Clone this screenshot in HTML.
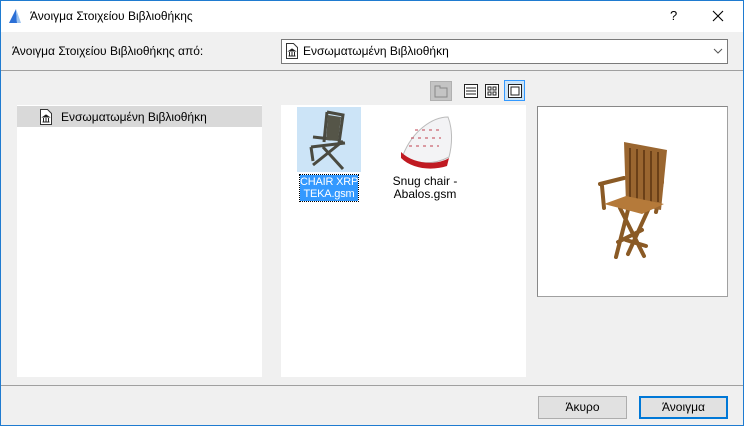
<!DOCTYPE html>
<html><head><meta charset="utf-8"><style>
*{margin:0;padding:0;box-sizing:border-box}
body{width:744px;height:426px;overflow:hidden;font-family:"Liberation Sans","DejaVu Sans",sans-serif;font-size:12px;color:#000;background:#f0f0f0}
.win{position:absolute;left:0;top:0;width:744px;height:426px;border:1px solid #1f7bd0;background:#f0f0f0}
.abs{position:absolute}
</style></head><body>
<div class="win"></div>
<div class="abs" style="left:1px;top:1px;width:742px;height:31px;background:#fff"></div>
<svg class="abs" style="left:7px;top:8px" width="16" height="16"><polygon points="2,15 9,1 10,15" fill="#2b6fd6"/><polygon points="9,1 14,15 10,15" fill="#9cc3f0"/></svg>
<div class="abs" style="left:30px;top:9px;font-size:12px">Άνοιγμα Στοιχείου Βιβλιοθήκης</div>
<div class="abs" style="left:670px;top:8px;font-size:13px">?</div>
<svg class="abs" style="left:712px;top:10px" width="12" height="12"><path d="M1 1L11 11M11 1L1 11" stroke="#000" stroke-width="1.1"/></svg>
<div class="abs" style="left:12px;top:44px">Άνοιγμα Στοιχείου Βιβλιοθήκης από:</div>
<div class="abs" style="left:281px;top:39px;width:447px;height:25px;background:#fff;border:1px solid #7a7a7a"></div>
<svg class="abs" style="left:285px;top:42px" width="14" height="18"><path d="M1.5 1.5h7l4 4v11h-11z" fill="#fff" stroke="#333"/><path d="M4 9l3-2 3 2zM4.5 10v3.5M7 10v3.5M9.5 10v3.5M3.5 14h7" stroke="#222" fill="#222"/></svg>
<div class="abs" style="left:303px;top:44px">Ενσωματωμένη Βιβλιοθήκη</div>
<svg class="abs" style="left:713px;top:47px" width="10" height="8"><path d="M1 2l4 4 4-4" stroke="#555" fill="none"/></svg>
<div class="abs" style="left:1px;top:70px;width:742px;height:1px;background:#a0a0a0"></div>
<div class="abs" style="left:430px;top:81px;width:22px;height:20px;background:#c4c4c4;border:1px solid #b0b0b0"></div>
<svg class="abs" style="left:434px;top:84px" width="14" height="14"><path d="M1 2h5v2h7v9H1z" fill="none" stroke="#888"/></svg>
<svg class="abs" style="left:463px;top:83px" width="16" height="16"><rect x="1.5" y="1.5" width="13" height="13" fill="#fff" stroke="#222"/><path d="M3 5h10M3 8h10M3 11h10" stroke="#222"/></svg>
<svg class="abs" style="left:484px;top:83px" width="16" height="16"><rect x="1.5" y="1.5" width="13" height="13" fill="#fff" stroke="#222"/><rect x="4" y="4" width="3" height="3" fill="none" stroke="#222"/><rect x="9" y="4" width="3" height="3" fill="none" stroke="#222"/><rect x="4" y="9" width="3" height="3" fill="none" stroke="#222"/><rect x="9" y="9" width="3" height="3" fill="none" stroke="#222"/></svg>
<div class="abs" style="left:504px;top:80px;width:21px;height:21px;background:#cce4f7;border:1px solid #3399ff"></div>
<svg class="abs" style="left:507px;top:83px" width="16" height="16"><rect x="1.5" y="1.5" width="13" height="13" fill="#fff" stroke="#222"/><rect x="4" y="4" width="8" height="8" fill="none" stroke="#222"/></svg>
<div class="abs" style="left:17px;top:105px;width:245px;height:272px;background:#fff"></div>
<div class="abs" style="left:17px;top:106px;width:245px;height:21px;background:#d9d9d9"></div>
<svg class="abs" style="left:39px;top:108px" width="14" height="18"><path d="M1.5 1.5h7l4 4v11h-11z" fill="#fff" stroke="#333"/><path d="M4 9l3-2 3 2zM4.5 10v3.5M7 10v3.5M9.5 10v3.5M3.5 14h7" stroke="#222" fill="#222"/></svg>
<div class="abs" style="left:61px;top:110px">Ενσωματωμένη Βιβλιοθήκη</div>
<div class="abs" style="left:281px;top:105px;width:245px;height:272px;background:#fff"></div>
<div class="abs" style="left:297px;top:107px;width:64px;height:65px;background:#cce4f7"></div>
<svg class="abs" style="left:297px;top:107px" width="64" height="65"><g stroke="#4a4a40" stroke-width="3" fill="none"><path d="M30 5l16 3-4 28M30 5l-3 30"/><path d="M16 30l18 2M14 40l34-4M16 58l30-24M26 40l20 22M14 40l2 14"/></g><path d="M31 8l13 2-3 24-12-1z" fill="#555548"/></svg>
<div class="abs" style="left:300px;top:175px;width:58px;height:26px;background:#3399ff;outline:1px dotted #000;color:#fff;text-align:center;font-size:11px;line-height:12px;padding-top:1px;white-space:nowrap;letter-spacing:-0.2px">CHAIR XRP<br>TEKA.gsm</div>
<svg class="abs" style="left:395px;top:110px" width="62" height="60"><path d="M8 45c10-25 30-38 45-38 4 10 5 25 1 40-15 8-35 8-46-2z" fill="#f3f3f5" stroke="#bbb"/><path d="M6 42c12 12 35 14 48 6l-2 8c-15 5-35 3-46-8z" fill="#c01a22"/><path d="M20 20h25M16 28h30M14 36h30" stroke="#c04050" stroke-dasharray="3 4"/></svg>
<div class="abs" style="left:380px;top:175px;width:90px;text-align:center;line-height:13px">Snug chair -<br>Abalos.gsm</div>
<div class="abs" style="left:537px;top:106px;width:191px;height:191px;background:#fff;border:1px solid #a0a0a0;border-top-color:#888;border-left-color:#888"></div>
<svg class="abs" style="left:590px;top:140px" width="90" height="125" viewBox="0 0 90 125"><g stroke="#8a5a25" stroke-width="4" fill="none" stroke-linecap="round"><path d="M10 44l24-6M48 50l24-10M12 46l2 22M72 42l-6 30"/><path d="M40 62l-14 55M58 70l-20 44M30 68l24 48M52 90l-24 12M36 100l20 6"/></g><path d="M34 2l43 8-6 60-35-6z" fill="#9a6630"/><path d="M40 8v52M47 9v52M54 10v52M61 11v52M68 12v50" stroke="#6b4018" stroke-width="2"/><path d="M14 64l22-8 38 8-22 10z" fill="#b57a3a"/></svg>
<div class="abs" style="left:1px;top:385px;width:742px;height:1px;background:#a0a0a0"></div>
<div class="abs" style="left:538px;top:396px;width:89px;height:23px;background:#e1e1e1;border:1px solid #adadad;text-align:center;line-height:21px">Άκυρο</div>
<div class="abs" style="left:639px;top:396px;width:89px;height:23px;background:#e1e1e1;border:2px solid #0078d7;text-align:center;line-height:19px">Άνοιγμα</div>
</body></html>
